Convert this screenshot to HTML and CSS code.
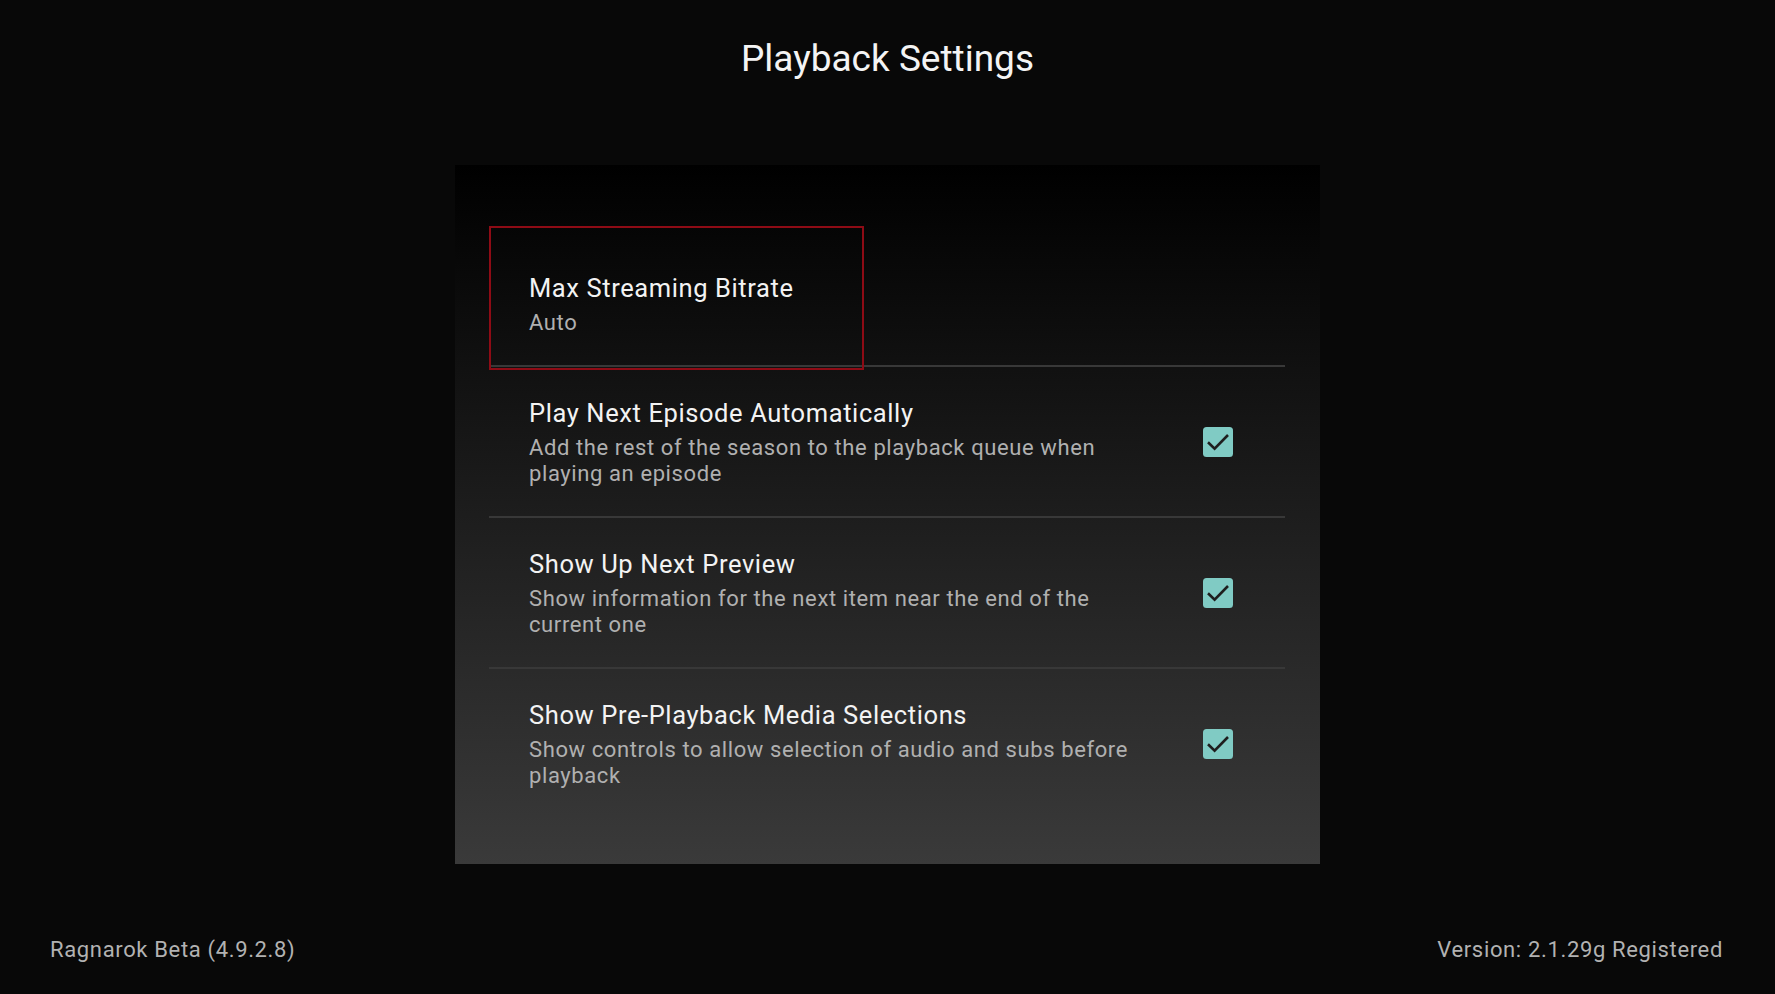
FILE: index.html
```html
<!DOCTYPE html>
<html lang="en">
  <head>
    <meta charset="UTF-8" />
    <meta name="viewport" content="width=device-width, initial-scale=1.0" />
    <title>Playback Settings</title>
    <link rel="stylesheet" href="styles.css">
  </head>
  <body>
    <div class="screen">
      <h1 class="screen-title">Playback Settings</h1>

      <div class="settings-panel">
        <div class="setting-row is-focused">
          <div class="setting-text">
            <div class="setting-name">Max Streaming Bitrate</div>
            <div class="setting-desc">Auto</div>
          </div>
        </div>

        <div class="setting-row">
          <div class="setting-text">
            <div class="setting-name">Play Next Episode Automatically</div>
            <div class="setting-desc">Add the rest of the season to the playback queue when playing an episode</div>
          </div>
          <svg class="setting-check" viewBox="0 0 30 30" width="30" height="30">
            <rect x="0" y="0" width="30" height="30" rx="3.5" fill="#80cbc4" />
            <path d="M5 15.2 L11.6 21.6 L25 8" fill="none" stroke="#1e1e1e" stroke-width="2.6" />
          </svg>
        </div>

        <div class="setting-row">
          <div class="setting-text">
            <div class="setting-name">Show Up Next Preview</div>
            <div class="setting-desc">Show information for the next item near the end of the current one</div>
          </div>
          <svg class="setting-check" viewBox="0 0 30 30" width="30" height="30">
            <rect x="0" y="0" width="30" height="30" rx="3.5" fill="#80cbc4" />
            <path d="M5 15.2 L11.6 21.6 L25 8" fill="none" stroke="#1e1e1e" stroke-width="2.6" />
          </svg>
        </div>

        <div class="setting-row">
          <div class="setting-text">
            <div class="setting-name">Show Pre-Playback Media Selections</div>
            <div class="setting-desc">Show controls to allow selection of audio and subs before playback</div>
          </div>
          <svg class="setting-check" viewBox="0 0 30 30" width="30" height="30">
            <rect x="0" y="0" width="30" height="30" rx="3.5" fill="#80cbc4" />
            <path d="M5 15.2 L11.6 21.6 L25 8" fill="none" stroke="#1e1e1e" stroke-width="2.6" />
          </svg>
        </div>
      </div>

      <div class="screen-footer">
        <span>Ragnarok Beta (4.9.2.8)</span>
        <span>Version: 2.1.29g Registered</span>
      </div>
    </div>
  </body>
</html>
```

FILE: styles.css
```css
html,
body {
  margin: 0;
  padding: 0;
  background: #080808;
}

body {
  font-family: Roboto, "Noto Sans", sans-serif;
  color: #f2f2f2;
}

.screen {
  height: 994px;
  display: flex;
  flex-direction: column;
  align-items: center;
}

.screen-title {
  margin: 0;
  padding-top: 37px;
  font-size: 37px;
  line-height: 44px;
  font-weight: 400;
  color: #f4f4f4;
}

.settings-panel {
  width: 865px;
  height: 699px;
  box-sizing: border-box;
  margin-top: 84px;
  padding: 61px 35px 0 34px;
  background: linear-gradient(to bottom, #000 0%, #3a3a3a 100%);
}

.setting-row {
  position: relative;
  display: flex;
  align-items: center;
  padding: 29px 52px 28px 40px;
  border-bottom: 2px solid #383838;
}

.setting-row:last-child {
  border-bottom: none;
}

.setting-row.is-focused {
  padding-top: 45px;
}

/* focus ring drawn over the row */
.setting-row.is-focused::after {
  content: "";
  position: absolute;
  left: 0;
  top: 0;
  width: 375px;
  bottom: -5px;
  border: 2px solid #8e0b15;
  box-sizing: border-box;
}

.setting-text {
  flex: 1;
  max-width: 622px;
}

.setting-name {
  font-size: 25.5px;
  line-height: 34px;
  letter-spacing: 0.6px;
  color: #f3f3f3;
}

.setting-desc {
  margin-top: 5px;
  font-size: 22px;
  line-height: 26.5px;
  letter-spacing: 0.6px;
  color: #b0b0b0;
}

.setting-check {
  margin-left: auto;
  flex: none;
}

.screen-footer {
  margin-top: auto;
  align-self: stretch;
  display: flex;
  justify-content: space-between;
  padding: 0 52px 31px 50px;
  font-size: 22px;
  line-height: 26px;
  letter-spacing: 0.65px;
  color: #b2b2b2;
}
```
